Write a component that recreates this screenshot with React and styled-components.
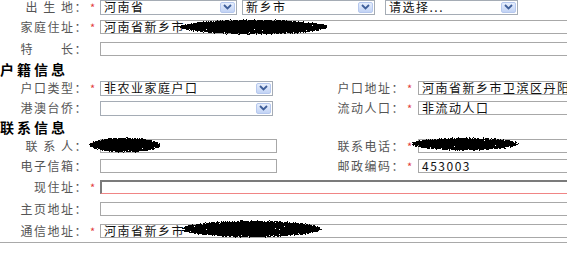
import styled, { createGlobalStyle } from "styled-components";

const GlobalStyle = createGlobalStyle`
  body {
    margin: 0;
    background: #fff;
    font-family: "Noto Sans CJK SC", "Noto Sans", sans-serif;
    overflow: hidden;
  }
`;

function Redact({ x, y, w, h, seed = 2 }) {
  return (
    <Scribble style={{ left: x, top: y }} width={w} height={h} viewBox={`0 0 ${w} ${h}`}>
      <filter id={`scr${seed}`} x="-5%" y="-20%" width="110%" height="140%">
        <feGaussianBlur in="SourceGraphic" stdDeviation="1.8" result="b" />
        <feTurbulence type="fractalNoise" baseFrequency="0.8" numOctaves="2" seed={seed} result="n" />
        <feComposite in="b" in2="n" operator="arithmetic" k1="0" k2="2.3" k3="2.2" k4="-2.25" result="m" />
        <feColorMatrix in="m" type="matrix" values="0 0 0 0 0  0 0 0 0 0  0 0 0 0 0  0 0 0 1 0" result="c" />
        <feComponentTransfer in="c">
          <feFuncA type="discrete" tableValues="0 1" />
        </feComponentTransfer>
      </filter>
      <ellipse cx={w / 2} cy={h / 2} rx={w / 2 - 2} ry={h / 2 - 2} fill="#000" filter={`url(#scr${seed})`} />
    </Scribble>
  );
}

function Arrow() {
  return (
    <ArrowBtn>
      <svg width="9" height="6" viewBox="0 0 9 6">
        <path d="M1 1 L4.5 4.5 L8 1" fill="none" stroke="#3f5f9a" strokeWidth="1.8" />
      </svg>
    </ArrowBtn>
  );
}

function Select({ w, ml, children }) {
  return (
    <SelectBox $w={w} $ml={ml}>
      <span>{children}</span>
      <Arrow />
    </SelectBox>
  );
}

export default function App() {
  return (
    <>
      <GlobalStyle />
      <Page>
        <Row $h={18}>
          <Label>出 生 地：</Label>
          <Star>*</Star>
          <Select w={137}>河南省</Select>
          <Select w={133} ml={5}>新乡市</Select>
          <Select w={133} ml={10}>请选择...</Select>
        </Row>
        <Row $h={22}>
          <Label>家庭住址：</Label>
          <Star>*</Star>
          <Box $w={480}>河南省新乡市</Box>
          <Redact x={176} y={1} w={156} h={20} seed={3} />
        </Row>
        <Row $h={22}>
          <Label>特　　长：</Label>
          <Star />
          <Box $w={480} />
        </Row>

        <Header>户籍信息</Header>
        <Row $h={20}>
          <Label>户口类型：</Label>
          <Star>*</Star>
          <Slot>
            <Select w={173}>非农业家庭户口</Select>
          </Slot>
          <Label $w={127}>户口地址：</Label>
          <Star $w={13}>*</Star>
          <Box $w={200}>河南省新乡市卫滨区丹阳路</Box>
        </Row>
        <Row $h={20}>
          <Label>港澳台侨：</Label>
          <Star />
          <Slot>
            <Select w={173} />
          </Slot>
          <Label $w={127}>流动人口：</Label>
          <Star $w={13}>*</Star>
          <Box $w={200}>非流动人口</Box>
        </Row>

        <Header>联系信息</Header>
        <Row $h={20}>
          <Label>联 系 人：</Label>
          <Star>*</Star>
          <Slot>
            <Box $w={177} />
          </Slot>
          <Label $w={127}>联系电话：</Label>
          <Star $w={13}>*</Star>
          <Box $w={200} />
          <Redact x={86} y={-1} w={78} h={20} seed={5} />
          <Redact x={408} y={-1} w={114} h={18} seed={7} />
        </Row>
        <Row $h={20}>
          <Label>电子信箱：</Label>
          <Star />
          <Slot>
            <Box $w={177} />
          </Slot>
          <Label $w={127}>邮政编码：</Label>
          <Star $w={13}>*</Star>
          <Box $w={200}>453003</Box>
        </Row>
        <Row $h={22}>
          <Label>现住址：</Label>
          <Star>*</Star>
          <Box $w={480} $active />
        </Row>
        <Row $h={22}>
          <Label>主页地址：</Label>
          <Star />
          <Box $w={480} />
        </Row>
        <Row $h={22}>
          <Label>通信地址：</Label>
          <Star>*</Star>
          <Box $w={480}>河南省新乡市</Box>
          <Redact x={178} y={-2} w={147} h={22} seed={9} />
        </Row>
      </Page>
    </>
  );
}

const Page = styled.div`
  width: 567px;
  margin-top: -2px;
  overflow: hidden;
  border-bottom: 1px solid #a9a9a9;
`;

const Row = styled.div`
  position: relative;
  display: flex;
  align-items: center;
  height: ${(p) => p.$h}px;
`;

const Label = styled.div`
  width: ${(p) => p.$w || 88}px;
  flex-shrink: 0;
  text-align: right;
  color: #555;
  font-size: 12px;
  line-height: 12px;
  letter-spacing: 1.5px;
  white-space: pre;
`;

const Star = styled.div`
  width: ${(p) => p.$w || 12}px;
  flex-shrink: 0;
  padding-left: 2px;
  box-sizing: border-box;
  color: #e23b3b;
  font-size: 11px;
  line-height: 11px;
`;

const Slot = styled.div`
  width: 178px;
  flex-shrink: 0;
  display: flex;
`;

const Box = styled.div`
  width: ${(p) => p.$w}px;
  flex-shrink: 0;
  height: 14px;
  box-sizing: border-box;
  border: 1px solid #a8a8a8;
  ${(p) =>
    p.$active &&
    `
    border-top: 2px solid #7b7b7b;
    border-left: 2px solid #7b7b7b;
    border-bottom: 1px solid #f08585;
  `}
  background: #fff;
  padding-left: 3px;
  font-size: 12px;
  line-height: 12px;
  letter-spacing: 1.5px;
  color: #111;
  white-space: nowrap;
  overflow: hidden;
`;

const SelectBox = styled.div`
  width: ${(p) => p.$w}px;
  margin-left: ${(p) => p.$ml || 0}px;
  flex-shrink: 0;
  height: 15px;
  box-sizing: border-box;
  border: 1px solid #a5acb5;
  background: #fff;
  display: flex;
  align-items: center;
  justify-content: space-between;
  padding: 0 1px 0 3px;
  font-size: 12px;
  line-height: 12px;
  letter-spacing: 1.5px;
  color: #111;
  white-space: nowrap;
`;

const ArrowBtn = styled.span`
  width: 15px;
  height: 11px;
  box-sizing: border-box;
  border: 1px solid #b6c8ee;
  border-radius: 2px;
  background: linear-gradient(#e6eefc, #c2d3f5);
  display: flex;
  align-items: center;
  justify-content: center;
`;

const Header = styled.div`
  height: 18px;
  line-height: 18px;
  font-size: 14px;
  font-weight: 700;
  letter-spacing: 3px;
  color: #000;
`;

const Scribble = styled.svg`
  position: absolute;
  pointer-events: none;
`;
